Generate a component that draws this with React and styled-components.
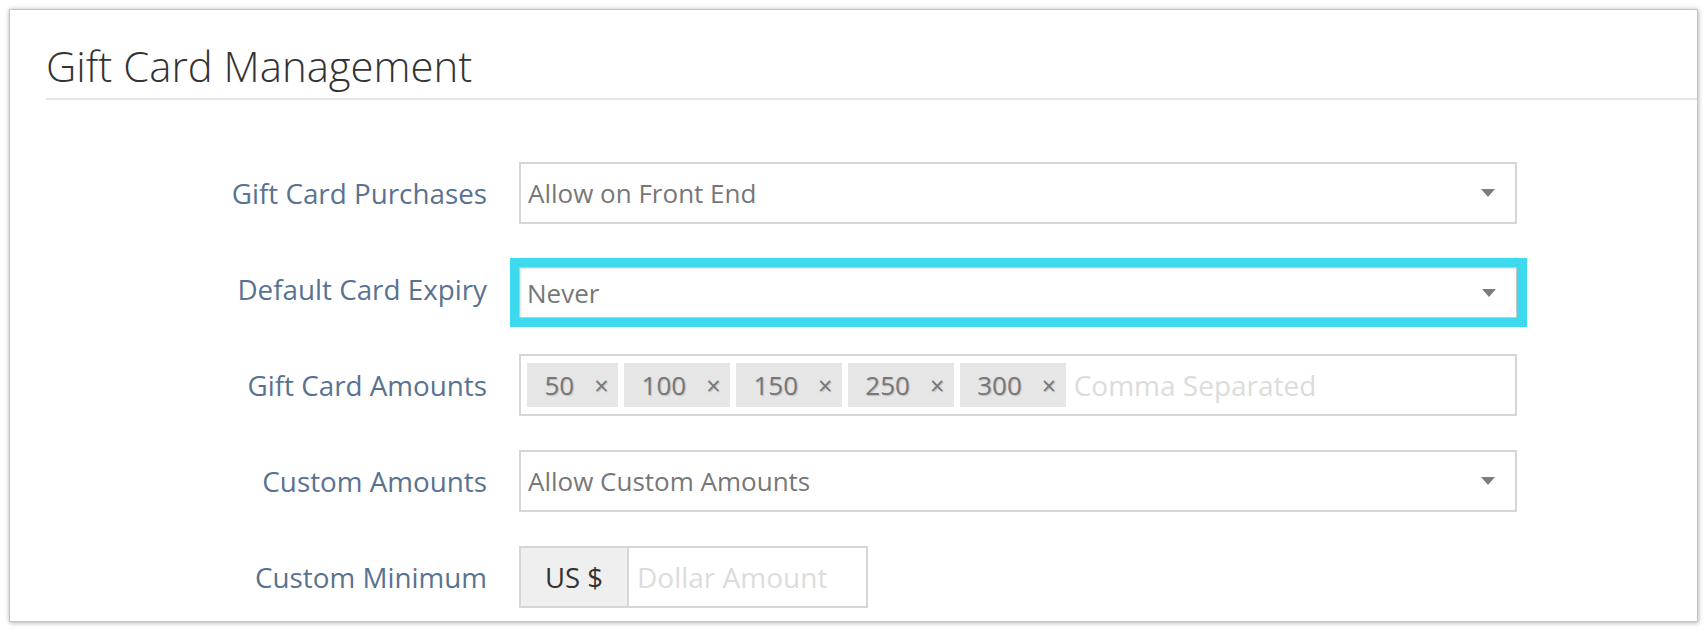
import React from 'react';
import styled, { createGlobalStyle } from 'styled-components';

const GlobalStyle = createGlobalStyle`
  body {
    margin: 0;
    background: #fff;
    font-family: 'Open Sans', 'Liberation Sans', sans-serif;
  }
  * {
    box-sizing: border-box;
  }
`;

const Page = styled.div`
  padding: 9px 10px 10px 9px;
`;

const Card = styled.div`
  height: 613px;
  background: #fff;
  border: 1px solid #c4c4c4;
  box-shadow: 0 0 5px rgba(0, 0, 0, 0.22), 1px 2px 4px rgba(0, 0, 0, 0.12);
`;

const Title = styled.h1`
  margin: 0 0 0 36px;
  padding: 32px 0 8px;
  font-size: 41.9px;
  line-height: 48px;
  font-weight: 300;
  color: #333;
  border-bottom: 2px solid #e6e6e6;
`;

const Form = styled.div`
  display: flex;
  flex-direction: column;
  gap: 34px;
  padding-top: 62px;
`;

const Row = styled.div`
  display: flex;
  align-items: center;
  gap: 32px;
  height: 62px;
`;

const Label = styled.div`
  flex: none;
  width: 477px;
  text-align: right;
  font-size: 27.8px;
  color: #5a7291;
`;

const Select = styled.div`
  display: flex;
  align-items: center;
  justify-content: space-between;
  width: 998px;
  height: ${props => (props.compact ? '51px' : '62px')};
  padding: 0 20px 0 7px;
  border: ${props => (props.compact ? '1px solid #c8c8c8' : '2px solid #d6d6d6')};
  box-shadow: ${props => (props.compact ? 'inset 1px 1px 2px rgba(0, 0, 0, 0.12)' : 'none')};
  font-size: 26px;
  color: #777;
`;

const Caret = styled.span`
  width: 0;
  height: 0;
  border-left: 7.5px solid transparent;
  border-right: 7.5px solid transparent;
  border-top: 8px solid #7d7d7d;
`;

const Highlight = styled.div`
  align-self: flex-start;
  margin-left: -9px;
  border: 9px solid #3dd9ed;
  border-right-width: 10px;
`;

const TagBox = styled.div`
  display: flex;
  align-items: center;
  gap: 6px;
  width: 998px;
  height: 62px;
  padding: 0 6px;
  border: 2px solid #d6d6d6;
`;

const Tag = styled.span`
  display: flex;
  align-items: center;
  gap: 20px;
  height: 44px;
  padding: 0 9.5px 0 17.5px;
  background: #e6e6e6;
  font-size: 26px;
  color: #777;
  text-shadow: 1px 1px 1px rgba(0, 0, 0, 0.18);
`;

const Remove = styled.span`
  font-size: 25px;
`;

const Placeholder = styled.span`
  margin-left: ${props => props.offset || 0}px;
  font-size: 28px;
  color: #dcdcdc;
`;

const InputGroup = styled.div`
  display: flex;
  width: 349px;
  height: 62px;
  border: 2px solid #d6d6d6;
`;

const Addon = styled.div`
  display: flex;
  align-items: center;
  justify-content: center;
  flex: none;
  width: 108px;
  background: #efefef;
  border-right: 2px solid #d6d6d6;
  font-size: 27.5px;
  color: #333;
`;

const AmountField = styled.div`
  display: flex;
  align-items: center;
  padding-left: 8px;
`;

const amounts = ['50', '100', '150', '250', '300'];

const App = () => (
  <Page>
    <GlobalStyle />
    <Card>
      <Title>Gift Card Management</Title>
      <Form>
        <Row>
          <Label>Gift Card Purchases</Label>
          <Select>
            Allow on Front End
            <Caret />
          </Select>
        </Row>

        <Row>
          <Label>Default Card Expiry</Label>
          <Highlight>
            <Select compact>
              Never
              <Caret />
            </Select>
          </Highlight>
        </Row>

        <Row>
          <Label>Gift Card Amounts</Label>
          <TagBox>
            {amounts.map(amount => (
              <Tag key={amount}>
                {amount}
                <Remove>×</Remove>
              </Tag>
            ))}
            <Placeholder offset={2}>Comma Separated</Placeholder>
          </TagBox>
        </Row>

        <Row>
          <Label>Custom Amounts</Label>
          <Select>
            Allow Custom Amounts
            <Caret />
          </Select>
        </Row>

        <Row>
          <Label>Custom Minimum</Label>
          <InputGroup>
            <Addon>US $</Addon>
            <AmountField>
              <Placeholder>Dollar Amount</Placeholder>
            </AmountField>
          </InputGroup>
        </Row>
      </Form>
    </Card>
  </Page>
);

export default App;
